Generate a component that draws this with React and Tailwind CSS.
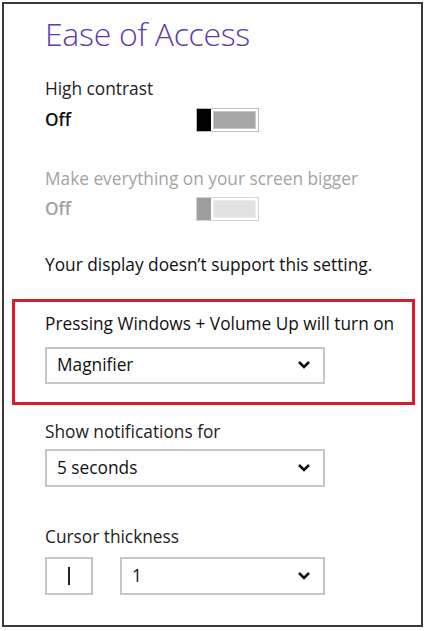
import React from 'react';

function Toggle({ disabled }) {
  return (
    <div
      className={
        'flex h-[24px] w-[63px] border ' +
        (disabled ? 'border-[#d4d4d4]' : 'border-[#bdbdbd]')
      }
    >
      <div className={'w-[14px] ' + (disabled ? 'bg-[#9e9e9e]' : 'bg-black')} />
      <div className="flex flex-1 p-[2px]">
        <div
          className={
            'flex-1 border ' +
            (disabled ? 'bg-[#e2e2e2] border-[#eeeeee]' : 'bg-[#a6a6a6] border-[#c9c9c9]')
          }
        />
      </div>
    </div>
  );
}

function Chevron() {
  return (
    <svg width="14" height="10" viewBox="0 0 14 10" className="shrink-0">
      <path d="M2 2 L7 7 L12 2" fill="none" stroke="#111" strokeWidth="2.6" />
    </svg>
  );
}

function Select({ value, className }) {
  return (
    <div
      className={
        'flex h-[37px] items-center justify-between border-2 border-[#c6c6c6] pl-[10px] pr-[12px] ' +
        (className || '')
      }
    >
      <span className="text-[17.3px] text-[#111]">{value}</span>
      <Chevron />
    </div>
  );
}

export default function App() {
  return (
    <div className="min-h-screen bg-white" style={{ fontFamily: '"Open Sans", "Noto Sans", sans-serif' }}>
      <div className="ml-[2px] mt-[2px] flex h-[625px] w-[421px] flex-col border-2 border-[#3a3a3a] pl-[8px] pr-[4px]">
        <div className="pl-[33px] pt-[10px]">
          <h1 className="text-[32px] font-light leading-[40px] tracking-[-0.3px] text-[#5c3da6]">
            Ease of Access
          </h1>

          <div className="mt-[24px] text-[17.3px] leading-[22px] text-[#222]">High contrast</div>
          <div className="mt-[7px] flex items-center">
            <span className="w-[151px] text-[17.3px] font-semibold text-[#111]">Off</span>
            <Toggle />
          </div>

          <div className="mt-[35px] text-[17.3px] leading-[22px] text-[#a3a3a3]">
            Make everything on your screen bigger
          </div>
          <div className="mt-[6px] flex items-center">
            <span className="w-[151px] text-[17.3px] font-semibold text-[#a3a3a3]">Off</span>
            <Toggle disabled />
          </div>

          <div className="mt-[32px] text-[17.3px] leading-[22px] text-[#111]">
            Your display doesn’t support this setting.
          </div>
        </div>

        <div className="mt-[23px] w-[403px] border-[3px] border-[#d21f2c] pb-[18px] pl-[30px] pt-[11px]">
          <div className="text-[17.3px] leading-[22px] text-[#111]">
            Pressing Windows + Volume Up will turn on
          </div>
          <Select value="Magnifier" className="mt-[12px] w-[280px]" />
        </div>

        <div className="pl-[33px]">
          <div className="mt-[16px] text-[17.3px] leading-[22px] text-[#222]">Show notifications for</div>
          <Select value="5 seconds" className="mt-[6px] h-[38px] w-[280px]" />

          <div className="mt-[39px] text-[17.3px] leading-[22px] text-[#222]">Cursor thickness</div>
          <div className="mt-[9px] flex gap-[27px]">
            <div className="flex h-[38px] w-[48px] items-center justify-center border-2 border-[#c6c6c6]">
              <div className="h-[18px] w-[2px] bg-[#222]" />
            </div>
            <Select value="1" className="h-[38px] w-[205px]" />
          </div>
        </div>
      </div>
    </div>
  );
}
